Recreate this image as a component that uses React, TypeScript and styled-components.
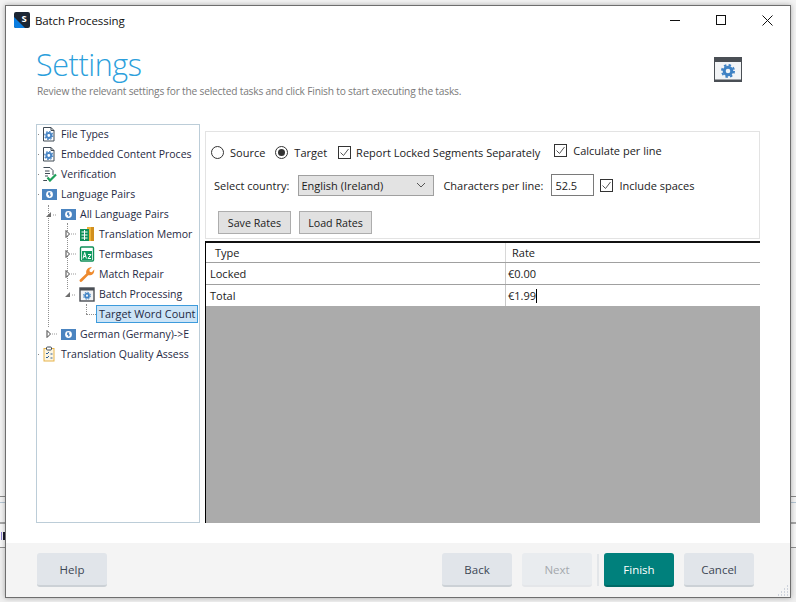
import React from "react";
import styled, { createGlobalStyle } from "styled-components";

const Global = createGlobalStyle`
  html, body { margin: 0; padding: 0; background: #f1f1f1; }
  body { width: 796px; height: 602px; overflow: hidden; font-family: "Open Sans", "Noto Sans", sans-serif; }
  * { box-sizing: border-box; }
`;

const Desktop = styled.div`
  width: 796px; height: 602px; padding: 5px 5px 4px 5px; display: flex; position: relative; overflow: hidden;
  background: linear-gradient(to bottom,
    #f3f3f3 0, #f3f3f3 496px, #8a8a8a 496px, #8a8a8a 497px,
    #f3f3f3 497px, #f3f3f3 502px, #b5c6d4 502px, #b5c6d4 503px,
    #f3f3f3 503px, #f3f3f3 522px, #a6a6a6 522px, #a6a6a6 524px,
    #f7f7f7 524px, #f7f7f7 547px, #8f8f8f 547px, #8f8f8f 548px,
    #efefef 548px, #efefef 602px);
`;
const BackMark = styled.span`
  position: absolute; left: 1px; top: 532px; width: 4px; height: 8px;
  background: linear-gradient(to right, #8a7fd0 0, #8a7fd0 1px, #f3f3f3 1px, #f3f3f3 2px, #1a1a2a 2px, #1a1a2a 4px);
`;
const Win = styled.div`
  width: 786px; height: 593px; background: #fff; border: 1px solid #6e6e6e;
  box-shadow: 0 0 5px rgba(0,0,0,.3); position: relative;
  display: flex; flex-direction: column; color: #1e1e1e; font-size: 11px;
`;
const TitleBar = styled.div`
  height: 30px; display: flex; align-items: center; padding: 0 0 2px 8px; flex: none;
`;
const TitleText = styled.span`
  margin-left: 5px; font-size: 11.5px; color: #111; letter-spacing: -.1px;
`;
const WinControls = styled.div`
  margin-left: auto; display: flex; align-items: center;
`;
const WinBtn = styled.div`
  width: 46px; height: 28px; display: flex; align-items: center; justify-content: center;
`;
const Header = styled.div`
  height: 88px; flex: none; padding: 9px 48px 0 31px; display: flex; justify-content: space-between;
`;
const Title = styled.div`
  font-weight: 300; font-size: 30.5px; line-height: 38px; color: #2c9fdc; letter-spacing: -.4px; margin-left: -1px;
`;
const Sub = styled.div`
  font-size: 10.2px; line-height: 14px; color: #7a7a7a; margin-top: 1px; letter-spacing: -.2px;
`;
const HeaderIcon = styled.div`
  margin-top: 12px;
`;
const Body = styled.div`
  flex: 1; display: flex; padding: 0 30px 20px 30px; min-height: 0; gap: 5px;
`;
const Tree = styled.div`
  width: 164px; border: 1px solid #bccdd8; flex: none; overflow: hidden; position: relative;
`;
const TreeRow = styled.div<{ $indent: number; $tick?: boolean }>`
  height: 20px; display: flex; align-items: center; padding-left: ${(p) => p.$indent}px; white-space: nowrap; position: relative;
  font-size: 10.5px; color: #1f2a44;
  &:first-of-type { height: 18px; margin-bottom: 1px; }
  ${(p) => p.$tick ? `&::before { content: ""; position: absolute; left: 1px; top: 50%; width: 1px; height: 1px; background: #8a8a8a; }` : ""}
`;
const Guide = styled.span<{ $x: number; $y: number; $h?: number; $w?: number }>`
  position: absolute; left: ${(p) => p.$x}px; top: ${(p) => p.$y}px;
  ${(p) => p.$h ? `height: ${p.$h}px; border-left: 1px dotted #8f8f8f;` : ""}
  ${(p) => p.$w ? `width: ${p.$w}px; border-top: 1px dotted #8f8f8f;` : ""}
`;
const Expander = styled.span`
  width: 19px; height: 20px; flex: none; display: flex; align-items: center; position: relative;
`;
const RowIcon = styled.span`
  width: 16px; height: 16px; flex: none; display: flex; align-items: center; justify-content: center; margin-right: 4px; position: relative;
`;
const RowLabel = styled.span<{ $selected?: boolean }>`
  ${(p) => p.$selected ? `background: #cce4f7; border: 1px solid #3d9bdc; height: 18px; line-height: 16px; padding: 0 0 0 2px; width: 102px; position: relative; font-size: 10.9px;` : ""}
`;
const Right = styled.div`
  flex: 1; display: flex; flex-direction: column; min-width: 0; padding-top: 7px;
`;
const Options = styled.div`
  height: 108px; flex: none; border: 1px solid #e3e3e3; padding: 0 0 0 5px; display: flex; flex-direction: column; font-size: 11px; color: #222;
`;
const OptRow = styled.div`
  display: flex; align-items: center; white-space: nowrap;
`;
const TopRow = styled(OptRow)`
  height: 28px; margin-top: 6px;
`;
const MidRow = styled(OptRow)`
  height: 24px; margin-top: 7px; padding-left: 3px;
`;
const BtnRow = styled(OptRow)`
  margin-top: 14px; padding-left: 7px; gap: 8px;
`;
const Raised = styled.span`
  display: flex; align-items: center; margin-bottom: 4px;
`;
const Radio = styled.span<{ $on?: boolean }>`
  width: 13px; height: 13px; border-radius: 50%; border: 1px solid #333; display: inline-flex; align-items: center; justify-content: center; flex: none;
  &::after { content: ""; width: 7px; height: 7px; border-radius: 50%; background: ${(p) => (p.$on ? "#333" : "transparent")}; }
`;
const Box = styled.span`
  width: 13px; height: 13px; border: 1px solid #333; display: inline-flex; align-items: center; justify-content: center; flex: none;
`;
const Lbl = styled.span<{ $l?: number; $r?: number }>`
  margin-left: ${(p) => p.$l ?? 0}px; margin-right: ${(p) => p.$r ?? 0}px;
`;
const Select = styled.div`
  width: 136px; height: 21px; background: #e3e3e3; border: 1px solid #a0a0a0; display: flex; align-items: center; padding: 0 7px 0 2px; justify-content: space-between; margin-left: 9px; font-size: 11px; color: #1b1b1b;
`;
const NumInput = styled.div`
  width: 43px; height: 22px; border: 1px solid #7a7a7a; display: flex; align-items: center; padding-left: 3px; margin-left: 8px; margin-right: 6px;
`;
const RateBtn = styled.div`
  width: 73px; height: 23px; background: #e1e1e1; border: 1px solid #adadad; display: flex; align-items: center; justify-content: center; font-size: 10.7px; color: #222;
`;
const Grid = styled.div`
  flex: 1; margin-top: 2px; background: #ababab; border-top: 2px solid #111; border-left: 1px solid #000; display: flex; flex-direction: column; min-height: 0; font-size: 11px; color: #1a1a1a;
`;
const GridRow = styled.div<{ $head?: boolean }>`
  display: grid; grid-template-columns: 299px 1fr; background: #fff; height: ${(p) => (p.$head ? 20 : 22)}px; border-bottom: 1px solid #a0a0a0; align-items: stretch;
  &:last-child { border-bottom: none; height: 21px; }
`;
const HeadCell = styled.div<{ $sep?: boolean }>`
  padding-left: ${(p) => (p.$sep ? 6 : 9)}px; display: flex; align-items: center; ${(p) => p.$sep ? "border-left: 1px solid #d8d8d8;" : ""}
`;
const Cell = styled.div<{ $sep?: boolean }>`
  padding-left: ${(p) => (p.$sep ? 2 : 4)}px; display: flex; align-items: center; ${(p) => p.$sep ? "border-left: 1px solid #c8c8c8;" : ""}
`;
const Caret = styled.span`
  width: 1px; height: 14px; background: #000; display: inline-block;
`;
const Footer = styled.div`
  height: 54px; flex: none; background: #f4f4f4; padding: 10px 36px 0 31px; display: flex;
`;
const FBtn = styled.div<{ $kind?: "primary" | "disabled" }>`
  width: 70px; height: 34px; border-radius: 3px; display: flex; align-items: center; justify-content: center; font-size: 11.5px;
  background: ${(p) => p.$kind === "primary" ? "#00807c" : p.$kind === "disabled" ? "#e9ecef" : "#e1e5ea"};
  color: ${(p) => p.$kind === "primary" ? "#fff" : p.$kind === "disabled" ? "#a4a8ad" : "#3c4654"};
  border-bottom: 2px solid ${(p) => p.$kind === "primary" ? "#006a66" : p.$kind === "disabled" ? "#e4e6e9" : "#ccd1d6"};
`;
const FooterRight = styled.div`
  margin-left: auto; display: flex; align-items: center; height: 34px;
`;
const Sep = styled.div`
  width: 2px; height: 32px; background: #e3e6e9; margin: 0 5px;
`;
const Gap = styled.div`
  width: 10px;
`;
const Grip = styled.svg`
  position: absolute; right: 1px; bottom: 1px;
`;

const Doc = () => (
  <svg width="16" height="16" viewBox="0 0 16 16"><path d="M2.5 1.5h7.5l3 3v10.500H2.500z" fill="#fff" stroke="#3f4a55"/><path d="M10 1.500v3h3" fill="none" stroke="#3f4a55"/><circle cx="7.800" cy="9.500" r="2.400" fill="none" stroke="#4a86c5" strokeWidth="2"/><circle cx="7.800" cy="9.500" r="4" fill="none" stroke="#4a86c5" strokeWidth="1.200" strokeDasharray="1.600 1.500"/></svg>
);
const Verify = () => (
  <svg width="16" height="16" viewBox="0 0 16 16"><path d="M2.500 1.500h6.500l3 3v4.500M6 14.500H2.500z" fill="#fff" stroke="#3f4a55"/><path d="M4 5h4.500M4 7.500h5M4 10h3" stroke="#3f4a55"/><path d="M6.500 11.500l2.500 3 6-6" fill="none" stroke="#1fa05a" strokeWidth="2.200"/></svg>
);
const Globe = () => (
  <svg width="15" height="11" viewBox="0 0 15 11"><rect width="15" height="11" fill="#4a84c0"/><circle cx="7.500" cy="5.500" r="3.400" fill="#fff"/><path d="M6.500 3.200l2 .3-.6 1.600 1.100 1-1.400 2-.6-1.800-1.200-.8z" fill="#4a84c0"/></svg>
);
const TM = () => (
  <svg width="16" height="16" viewBox="0 0 16 16"><rect x="8" y="1" width="7" height="14" fill="#eeb23a"/><rect x="12" y="1" width="3" height="14" fill="#d18f1e"/><rect x="1" y="3" width="9" height="12" fill="#0f8f58"/><path d="M2.500 6h6M2.500 9h6M2.500 12h6M5.500 4v10" stroke="#fff"/></svg>
);
const Term = () => (
  <svg width="16" height="16" viewBox="0 0 16 16"><rect x="1.500" y="1" width="13" height="14" rx="1" fill="#fff" stroke="#0f8f58" strokeWidth="1.400"/><rect x="3" y="5" width="10" height="9" fill="#109a60"/><path d="M4 12.500l1.700-6 1.700 6M4.700 10.500h2M9 8.500h3l-3 4h3" fill="none" stroke="#fff"/></svg>
);
const Wrench = () => (
  <svg width="16" height="16" viewBox="0 0 16 16"><path d="M1 13.500L7.300 7.400C6.500 4 9 .8 13 1.200L10.400 3.800l.4 2 2 .4L15.200 3.600c.5 4-2.700 6.400-6 5.600L3 15.500a1.400 1.400 0 0 1-2-2z" fill="#ee8a2e"/></svg>
);
const Batch = () => (
  <svg width="16" height="15" viewBox="0 0 16 15"><rect x="1" y="1" width="14" height="13" fill="#f0f2f4" stroke="#4a4f55" strokeWidth="1.400"/><rect x="1" y="1" width="14" height="2.500" fill="#4a4f55"/><circle cx="8" cy="8.700" r="2" fill="none" stroke="#3f82c4" strokeWidth="1.800"/><circle cx="8" cy="8.700" r="3.500" fill="none" stroke="#3f82c4" strokeWidth="1" strokeDasharray="1.500 1.250"/></svg>
);
const Quality = () => (
  <svg width="16" height="16" viewBox="0 0 16 16"><rect x="3" y="2.500" width="10" height="12.500" fill="#fdf6e3" stroke="#e6b34a"/><rect x="5.500" y="1" width="5" height="3" rx="1" fill="#fff" stroke="#3f4a55"/><path d="M5 7l1 1 2-2M5 11l1 1 2-2M9.500 8h2M9.500 12h2" fill="none" stroke="#2f5f99"/></svg>
);
const Arrow = ({ open }: { open?: boolean }) => open ? (
  <svg width="19" height="20" viewBox="0 0 19 20"><path d="M5 13h5V8z" fill="#6e6e6e"/><path d="M12 11h4" stroke="#999" strokeDasharray="1 1"/></svg>
) : (
  <svg width="19" height="20" viewBox="0 0 19 20"><path d="M6 6.500l3.500 3.500-3.500 3.500z" fill="#fff" stroke="#444"/><path d="M11 10h6" stroke="#999" strokeDasharray="1 1"/></svg>
);
const Check = () => (
  <svg width="11" height="11" viewBox="0 0 11 11"><path d="M1.500 5.500l3 3 5-6.500" fill="none" stroke="#555" strokeWidth="1"/></svg>
);

const Row = ({ indent, arrow, icon, label, selected, tick }: { indent: number; arrow?: "open" | "closed"; icon?: React.ReactNode; label: string; selected?: boolean; tick?: boolean }) => (
  <TreeRow $indent={indent} $tick={tick}>
    {arrow && <Expander><Arrow open={arrow === "open"} /></Expander>}
    {icon && <RowIcon>{icon}</RowIcon>}
    <RowLabel $selected={selected}>{label}</RowLabel>
  </TreeRow>
);

export default function App() {
  return (
    <Desktop>
      <Global />
      <BackMark />
      <Win>
        <TitleBar>
          <svg width="16" height="16" viewBox="0 0 16 16"><rect width="16" height="16" rx="2" fill="#1b2533"/><path d="M0 5l11 11H2a2 2 0 0 1-2-2z" fill="#0a7de0"/><text x="7.500" y="9.500" fontSize="9.500" fontWeight="700" fill="#fff" fontFamily="Open Sans">S</text></svg>
          <TitleText>Batch Processing</TitleText>
          <WinControls>
            <WinBtn><svg width="11" height="11"><path d="M0 5.500h10" stroke="#111"/></svg></WinBtn>
            <WinBtn><svg width="11" height="11"><rect x=".5" y=".5" width="9" height="9" fill="none" stroke="#111"/></svg></WinBtn>
            <WinBtn><svg width="11" height="11"><path d="M.5.5l10 10M10.500.5l-10 10" stroke="#111"/></svg></WinBtn>
          </WinControls>
        </TitleBar>
        <Header>
          <div>
            <Title>Settings</Title>
            <Sub>Review the relevant settings for the selected tasks and click Finish to start executing the tasks.</Sub>
          </div>
          <HeaderIcon>
            <svg width="28" height="25" viewBox="0 0 28 25"><rect x="0.500" y="0.500" width="27" height="24" rx="1" fill="#f2f4f6" stroke="#4a4f55"/><rect x="0" y="0" width="28" height="5" fill="#4a4f55"/><rect x="0" y="22.500" width="28" height="2.500" fill="#4a4f55"/><circle cx="14" cy="14" r="3.800" fill="none" stroke="#3f82c4" strokeWidth="3"/><circle cx="14" cy="14" r="6" fill="none" stroke="#3f82c4" strokeWidth="2" strokeDasharray="2.400 2.300"/></svg>
          </HeaderIcon>
        </Header>
        <Body>
          <Tree>
            <Guide $x={11} $y={80} $h={122} />
            <Guide $x={30} $y={98} $h={66} />
            <Guide $x={49} $y={179} $h={10} />
            <Guide $x={49} $y={189} $w={10} />
            <Row tick indent={4} icon={<Doc />} label="File Types" />
            <Row tick indent={4} icon={<Doc />} label="Embedded Content Proces" />
            <Row tick indent={4} icon={<Verify />} label="Verification" />
            <Row tick indent={4} icon={<Globe />} label="Language Pairs" />
            <Row indent={4} arrow="open" icon={<Globe />} label="All Language Pairs" />
            <Row indent={23} arrow="closed" icon={<TM />} label="Translation Memor" />
            <Row indent={23} arrow="closed" icon={<Term />} label="Termbases" />
            <Row indent={23} arrow="closed" icon={<Wrench />} label="Match Repair" />
            <Row indent={23} arrow="open" icon={<Batch />} label="Batch Processing" />
            <Row indent={59} label="Target Word Count" selected />
            <Row indent={4} arrow="closed" icon={<Globe />} label="German (Germany)->E" />
            <Row tick indent={4} icon={<Quality />} label="Translation Quality Assess" />
          </Tree>
          <Right>
            <Options>
              <TopRow>
                <Radio /><Lbl $l={6} $r={10}>Source</Lbl>
                <Radio $on /><Lbl $l={6} $r={11}>Target</Lbl>
                <Box><Check /></Box><Lbl $l={5} $r={14}>Report Locked Segments Separately</Lbl>
                <Raised><Box><Check /></Box><Lbl $l={6}>Calculate per line</Lbl></Raised>
              </TopRow>
              <MidRow>
                <Lbl>Select country:</Lbl>
                <Select>English (Ireland)<svg width="10" height="6"><path d="M1 1l4 4 4-4" fill="none" stroke="#555"/></svg></Select>
                <Lbl $l={9}>Characters per line:</Lbl>
                <NumInput>52.5</NumInput>
                <Box><Check /></Box><Lbl $l={6}>Include spaces</Lbl>
              </MidRow>
              <BtnRow>
                <RateBtn>Save Rates</RateBtn>
                <RateBtn>Load Rates</RateBtn>
              </BtnRow>
            </Options>
            <Grid>
              <GridRow $head>
                <HeadCell>Type</HeadCell>
                <HeadCell $sep>Rate</HeadCell>
              </GridRow>
              <GridRow>
                <Cell>Locked</Cell>
                <Cell $sep>€0.00</Cell>
              </GridRow>
              <GridRow>
                <Cell>Total</Cell>
                <Cell $sep>€1.99<Caret /></Cell>
              </GridRow>
            </Grid>
          </Right>
        </Body>
        <Footer>
          <FBtn>Help</FBtn>
          <FooterRight>
            <FBtn>Back</FBtn><Gap />
            <FBtn $kind="disabled">Next</FBtn>
            <Sep />
            <FBtn $kind="primary">Finish</FBtn><Gap />
            <FBtn>Cancel</FBtn>
          </FooterRight>
          <Grip width="11" height="11" viewBox="0 0 11 11"><path d="M9 1h1M9 4h1M6 4h1M9 7h1M6 7h1M3 7h1M9 10h1M6 10h1M3 10h1M0 10h1" stroke="#a9b3c4"/></Grip>
        </Footer>
      </Win>
    </Desktop>
  );
}
